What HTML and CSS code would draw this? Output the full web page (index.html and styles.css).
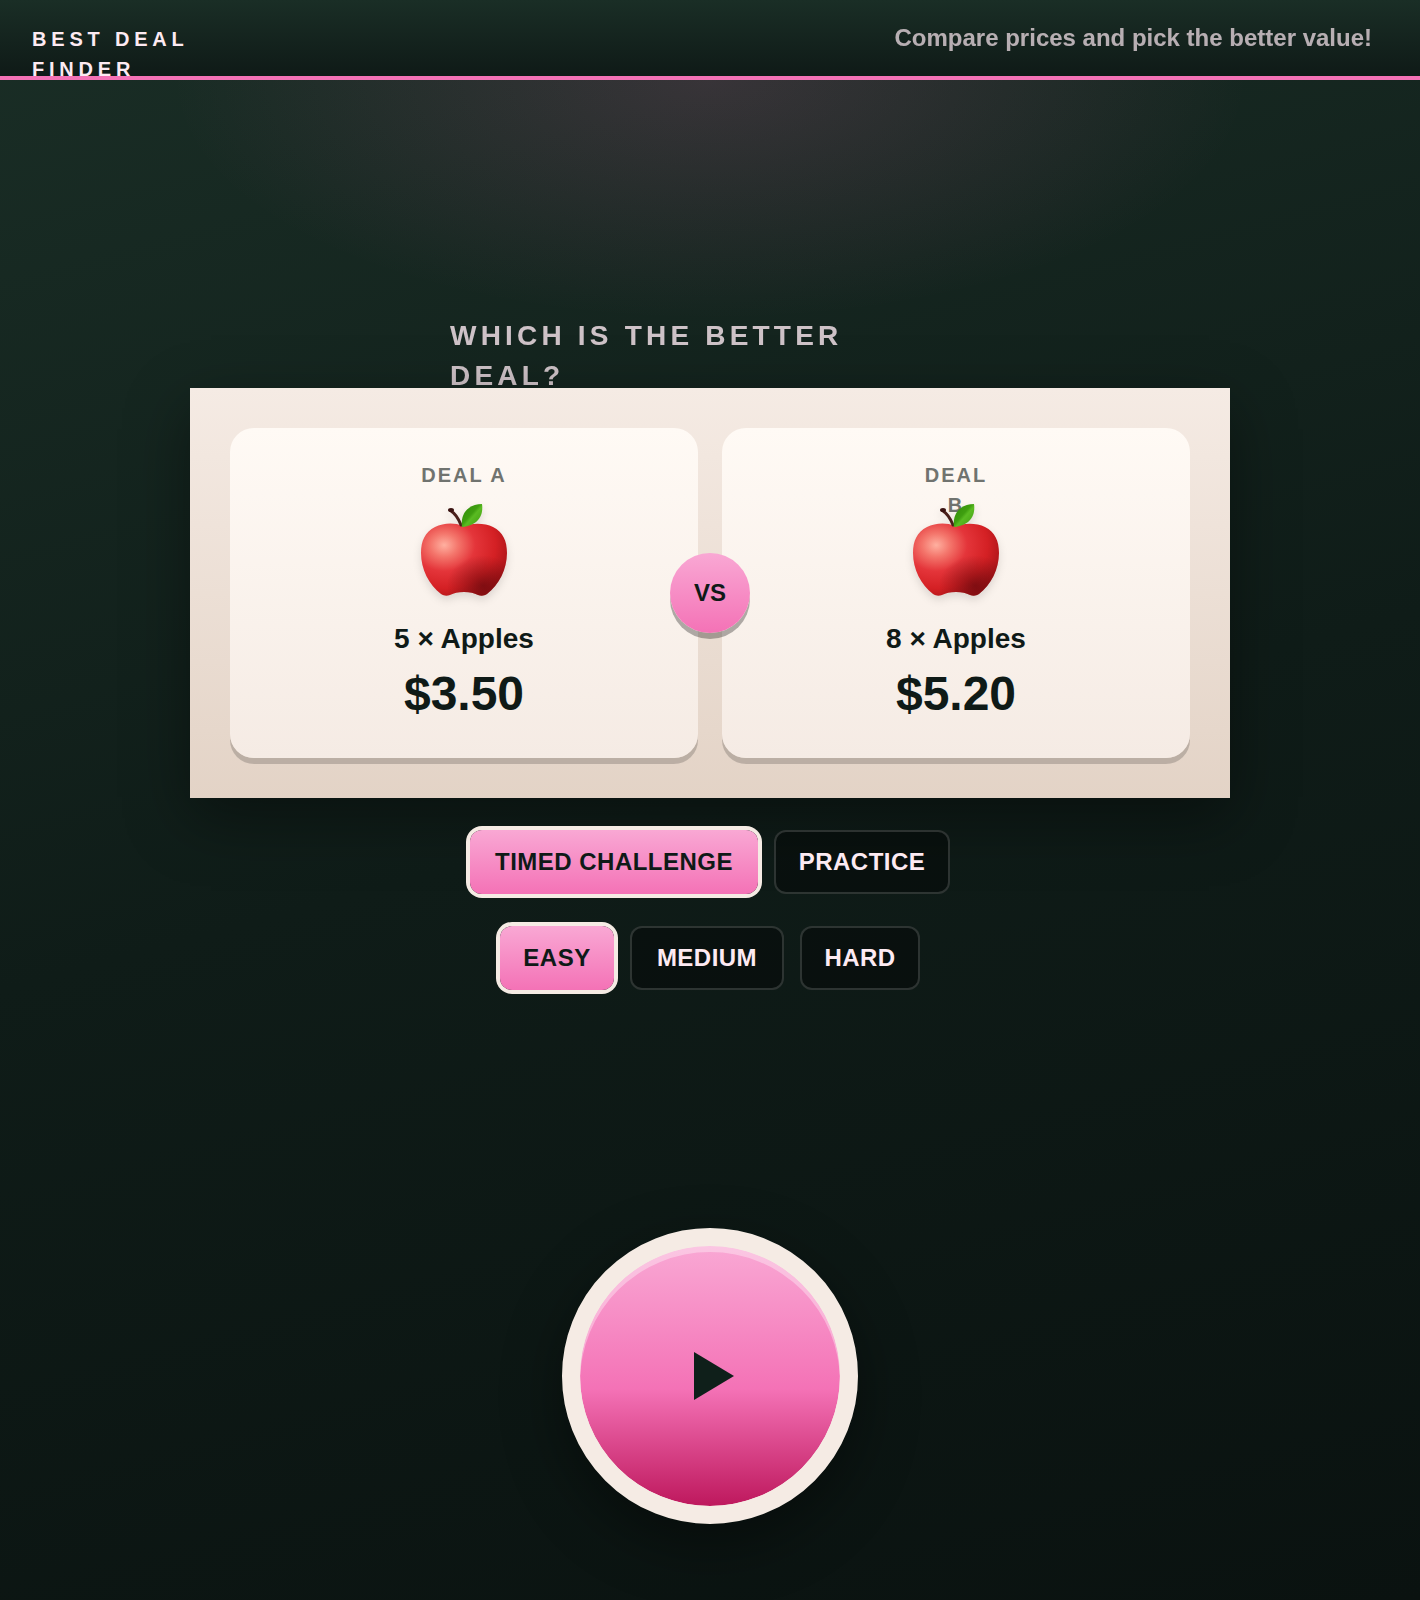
FILE: index.html
```
<!DOCTYPE html>
<html lang="en">
<head>
    <meta charset="UTF-8">
    <meta name="viewport" content="width=device-width, initial-scale=1.0">
    <title>Best Deal Finder</title>
    <link rel="stylesheet" href="styles.css">
</head>
<body>
    <!-- Shared apple drawing -->
    <svg class="defs" width="0" height="0" aria-hidden="true">
        <defs>
            <radialGradient id="apple-skin" cx="0.27" cy="0.3" r="0.8">
                <stop offset="0" stop-color="#ffb0a0"/>
                <stop offset="0.2" stop-color="#f4766c"/>
                <stop offset="0.45" stop-color="#e4353a"/>
                <stop offset="0.75" stop-color="#d42024"/>
                <stop offset="1" stop-color="#a81418"/>
            </radialGradient>
            <radialGradient id="apple-shade" cx="0.72" cy="0.86" r="0.42">
                <stop offset="0" stop-color="#5a060a" stop-opacity="0.6"/>
                <stop offset="1" stop-color="#5a060a" stop-opacity="0"/>
            </radialGradient>
            <linearGradient id="apple-leaf" x1="0" y1="0" x2="1" y2="1">
                <stop offset="0" stop-color="#2f8a08"/>
                <stop offset="0.45" stop-color="#3f9f10"/>
                <stop offset="0.55" stop-color="#5abb22"/>
                <stop offset="1" stop-color="#3d9a10"/>
            </linearGradient>
            <symbol id="apple" viewBox="0 0 96 96">
                <path d="M47 23 C38 19 27 20 19 24 C9 29 5 38 5 50 C5 66 13 82 25 91 C28 93 31 93 34 92 C38 90 42 89 48 89 C54 89 58 90 62 92 C65 93 68 93 71 91 C83 82 91 66 91 50 C91 38 87 29 77 24 C69 20 57 20 47 23 Z" fill="url(#apple-skin)"/>
                <path d="M47 23 C38 19 27 20 19 24 C9 29 5 38 5 50 C5 66 13 82 25 91 C28 93 31 93 34 92 C38 90 42 89 48 89 C54 89 58 90 62 92 C65 93 68 93 71 91 C83 82 91 66 91 50 C91 38 87 29 77 24 C69 20 57 20 47 23 Z" fill="url(#apple-shade)"/>
                <path d="M35 8 C40 11 43 17 45 22" fill="none" stroke="#4a1f1a" stroke-width="3" stroke-linecap="round"/>
                <ellipse cx="35" cy="7" rx="3" ry="2" fill="#3a1210"/>
                <path d="M46 24 C44 10 53 1 66 1 C68 14 60 23 46 24 Z" fill="url(#apple-leaf)"/>
            </symbol>
        </defs>
    </svg>

    <header class="header">
        <h1 class="logo">Best Deal Finder</h1>
        <p class="tagline">Compare prices and pick the better value!</p>
    </header>

    <main class="game">
        <div class="stage">
            <h2 class="question">Which is the better deal?</h2>

            <div class="board">
                <div class="card">
                    <div class="card-label">Deal A</div>
                    <svg class="card-icon" role="img" aria-label="Apple"><use href="#apple"/></svg>
                    <div class="card-qty">5 × Apples</div>
                    <div class="card-price">$3.50</div>
                </div>
                <div class="card">
                    <div class="card-label narrow">Deal B</div>
                    <svg class="card-icon" role="img" aria-label="Apple"><use href="#apple"/></svg>
                    <div class="card-qty">8 × Apples</div>
                    <div class="card-price">$5.20</div>
                </div>
                <div class="vs">VS</div>
            </div>

            <div class="options modes">
                <button type="button" class="option active">Timed Challenge</button>
                <button type="button" class="option">Practice</button>
            </div>
            <div class="options levels">
                <button type="button" class="option active">Easy</button>
                <button type="button" class="option">Medium</button>
                <button type="button" class="option">Hard</button>
            </div>
        </div>

        <button type="button" class="play" aria-label="Play">
            <svg width="40" height="48" viewBox="0 0 40 48"><path d="M0 0 L40 24 L0 48 Z" fill="#0f1f1a"/></svg>
        </button>
    </main>

    <script>
        document.querySelectorAll(".options").forEach(group => {
            group.addEventListener("click", (event) => {
                const button = event.target.closest(".option");
                if (!button) return;
                group.querySelectorAll(".option").forEach(b => b.classList.remove("active"));
                button.classList.add("active");
            });
        });
    </script>
</body>
</html>
```
FILE: styles.css
```
* {
    margin: 0;
    padding: 0;
    box-sizing: border-box;
}

body {
    display: flex;
    flex-direction: column;
    min-height: 100vh;
    font-family: "Liberation Sans", Arial, sans-serif;
    font-weight: bold;
    color: #fdeaf2;
    background: linear-gradient(165deg, #1a2e26 0%, #0f1c18 50%, #0a1210 100%);
}

button {
    font: inherit;
    border: none;
    cursor: pointer;
}

.defs {
    position: absolute;
}

.header {
    display: flex;
    justify-content: space-between;
    align-items: flex-start;
    height: 80px;
    padding: 24px 48px 0 32px;
    background: linear-gradient(180deg, #1a2e26, #0f1a17);
    border-bottom: 4px solid #f472b6;
}

.logo {
    max-width: 200px;
    font-size: 20px;
    line-height: 30px;
    letter-spacing: 0.24em;
    text-transform: uppercase;
}

.tagline {
    font-size: 24px;
    line-height: 28px;
    opacity: 0.7;
}

.game {
    flex: 1;
    display: flex;
    flex-direction: column;
    align-items: center;
    padding-bottom: 76px;
    background: radial-gradient(ellipse 540px 240px at 50% 0, rgba(244, 114, 182, 0.15), transparent);
}

.stage {
    flex: 1;
    width: 100%;
    display: flex;
    flex-direction: column;
    align-items: center;
    justify-content: center;
    gap: 32px;
    padding-bottom: 2px;
}

.question {
    width: 520px;
    max-width: 100%;
    margin-bottom: -40px;
    padding-right: 40px;
    font-size: 28px;
    line-height: 40px;
    letter-spacing: 0.15em;
    text-transform: uppercase;
    opacity: 0.8;
}

.board {
    position: relative;
    display: grid;
    grid-template-columns: 1fr 1fr;
    gap: 24px;
    width: 100%;
    max-width: 1040px;
    padding: 40px;
    background: linear-gradient(180deg, #f5ebe4, #e3d3c6);
    box-shadow: 0 20px 60px rgba(0, 0, 0, 0.4);
}

.card {
    display: flex;
    flex-direction: column;
    align-items: center;
    height: 330px;
    padding-top: 32px;
    border-radius: 24px;
    background: linear-gradient(180deg, #fffaf5, #f5ebe4);
    box-shadow: 0 6px 0 rgba(0, 0, 0, 0.18);
    color: #0f1a17;
}

.card-label {
    height: 43px;
    font-size: 20px;
    line-height: 30px;
    letter-spacing: 2px;
    text-align: center;
    text-transform: uppercase;
    color: #70736f;
}

.card-label.narrow {
    width: 72px;
}

.card-icon {
    width: 96px;
    height: 96px;
    margin-bottom: 20px;
    position: relative;
    filter: drop-shadow(0 4px 4px rgba(0, 0, 0, 0.12));
}

.card-qty {
    font-size: 28px;
    line-height: 40px;
}

.card-price {
    font-size: 48px;
    line-height: 70px;
}

.vs {
    position: absolute;
    top: 50%;
    left: 50%;
    width: 80px;
    height: 80px;
    transform: translate(-50%, -50%);
    border-radius: 50%;
    background: linear-gradient(180deg, #f9a8d4, #f472b6);
    box-shadow: 0 6px 0 rgba(0, 0, 0, 0.3);
    font-size: 24px;
    line-height: 80px;
    text-align: center;
    color: #0f1a17;
}

/* keeps the buttons above the shadow of the board */
.options {
    position: relative;
    display: grid;
    gap: 16px;
}

.modes {
    grid-template-columns: 288px 176px;
}

.levels {
    grid-template-columns: 114px 154px 120px;
}

.option {
    height: 64px;
    border: 2px solid rgba(255, 255, 255, 0.15);
    border-radius: 12px;
    background: rgba(0, 0, 0, 0.35);
    font-size: 24px;
    letter-spacing: 0.02em;
    text-transform: uppercase;
    color: #fdeaf2;
}

.option.active {
    border: none;
    background: linear-gradient(180deg, #f9a8d4, #f472b6);
    box-shadow: 0 0 0 4px #f5ebe4;
    color: #0f1a17;
}

.play {
    display: flex;
    align-items: center;
    justify-content: center;
    width: 296px;
    height: 296px;
    padding-left: 8px;
    border: 18px solid #f5ebe4;
    border-radius: 50%;
    background:
        linear-gradient(180deg, #f9a8d4 0%, #f472b6 55%, #be185d 100%) padding-box,
        linear-gradient(#f5ebe4, #f5ebe4) border-box;
    box-shadow: inset 0 6px 0 rgba(255, 255, 255, 0.35), 0 20px 60px rgba(0, 0, 0, 0.4);
}
```
